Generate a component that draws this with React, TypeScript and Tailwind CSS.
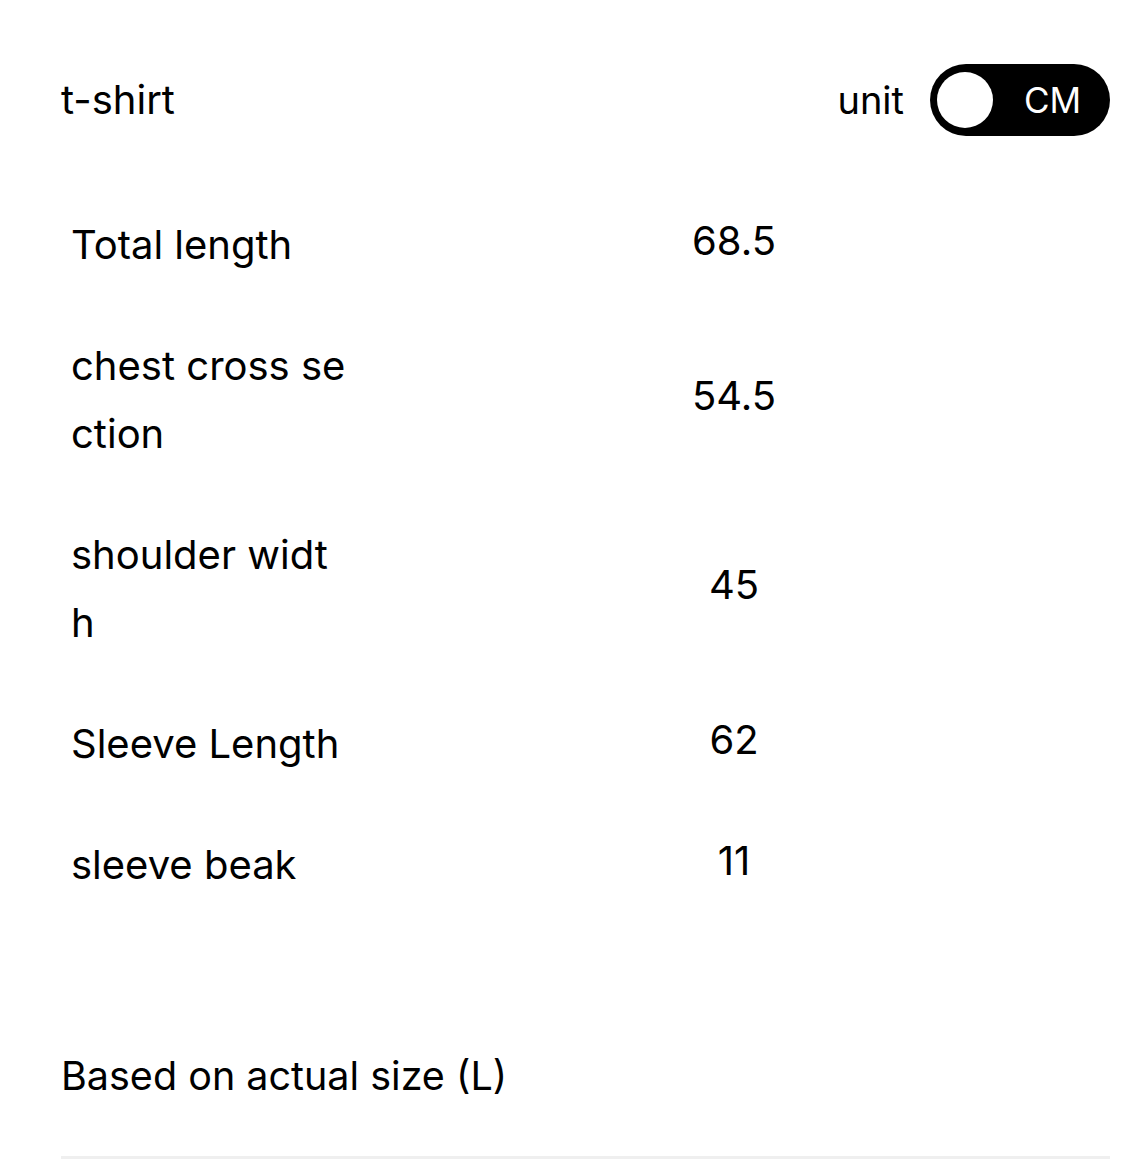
import React from 'react';

const ROWS = [
  { label: 'Total length', value: '68.5' },
  { label: 'chest cross section', value: '54.5' },
  { label: 'shoulder width', value: '45' },
  { label: 'Sleeve Length', value: '62' },
  { label: 'sleeve beak', value: '11' },
];

const App: React.FC = () => {
  return (
    <div className="min-h-screen bg-white text-black pl-[61px] pr-[31px] pt-[64px] font-['Inter','Noto_Sans',sans-serif]">
      {/* header */}
      <div className="flex items-center justify-between h-[72px]">
        <div className="text-[40px] leading-none">t-shirt</div>
        <div className="flex items-center gap-[26px]">
          <span className="text-[38px] leading-none">unit</span>
          <div className="flex items-center w-[180px] h-[72px] rounded-full bg-black pl-[7px]">
            <div className="w-[56px] h-[56px] rounded-full bg-white" />
            <span className="flex-1 text-center text-white text-[35px] leading-none pl-[2px]">CM</span>
          </div>
        </div>
      </div>

      {/* size table */}
      <div className="mt-[48px] flex flex-col">
        {ROWS.map((r) => (
          <div key={r.label} className="flex items-center py-[26.5px]">
            <div className="w-[285px] pl-[10px] text-[40px] leading-[68px] break-all">{r.label}</div>
            <div className="flex-1 text-center text-[40px] leading-none pb-[7px] pl-[12px]">{r.value}</div>
          </div>
        ))}
      </div>

      <div className="mt-[117px] text-[39.5px] leading-[68px]">Based on actual size (L)</div>
      <div className="mt-[46px] h-[3px] bg-[#efefef]" />
    </div>
  );
};

export default App;
